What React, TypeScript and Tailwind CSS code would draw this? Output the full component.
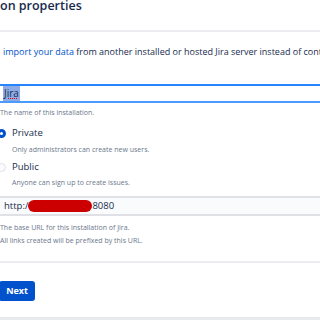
const font = { fontFamily: '"Open Sans", "Noto Sans", sans-serif' };

const Radio = ({ checked }: { checked: boolean }) => (
  <span
    className={
      checked
        ? "w-[9px] h-[9px] -ml-[3px] rounded-full border-[3px] border-[#0052cc] bg-white shrink-0"
        : "w-[9px] h-[9px] -ml-[3px] rounded-full border border-[#dfe1e6] bg-[#fafbfc] shrink-0"
    }
  />
);

export default function App() {
  return (
    <div
      className="w-[320px] h-[320px] overflow-hidden bg-white flex flex-col text-[#172b4d]"
      style={font}
    >
      {/* Header */}
      <div className="h-[32px] shrink-0 border-b-2 border-[#ebecf0]">
        <h1 className="-mt-[1px] text-[12.5px] leading-[14px] font-semibold whitespace-nowrap">
          on properties
        </h1>
      </div>

      <p className="mt-[14px] pl-[3px] text-[9px] leading-[12px] whitespace-nowrap">
        <span className="text-[#0052cc]">import your data</span> from another
        installed or hosted Jira server instead of continuing
      </p>

      {/* Name field */}
      <div className="mt-[26px] -ml-[6px] w-[340px] h-[20px] border-2 border-[#4c9aff] border-t-[#2684ff] bg-white flex items-center pl-[7px] text-[10px]">
        <span className="bg-[#8eabe6] px-[1px] underline decoration-dotted decoration-[#e00000]">
          Jira
        </span>
      </div>
      <p className="mt-[5px] text-[7px] leading-[10px] text-[#6b778c]">
        The name of this installation.
      </p>

      {/* Mode */}
      <div className="mt-[8px] flex items-center gap-[6px] text-[9.5px] leading-[14px]">
        <Radio checked />
        <span>Private</span>
      </div>
      <p className="mt-[5px] pl-[12px] text-[7px] leading-[10px] text-[#6b778c]">
        Only administrators can create new users.
      </p>
      <div className="mt-[5px] flex items-center gap-[6px] text-[9.5px] leading-[14px]">
        <Radio checked={false} />
        <span>Public</span>
      </div>
      <p className="mt-[4px] pl-[12px] text-[7px] leading-[10px] text-[#6b778c]">
        Anyone can sign up to create issues.
      </p>

      {/* Base URL */}
      <div className="mt-[8px] -ml-[6px] w-[340px] h-[20px] shrink-0 border-2 border-[#dfe1e6] bg-[#fafbfc] flex items-center pl-[8px] text-[9.5px]">
        <span>http:/</span>
        <span className="w-[64px] h-[12px] rounded-full bg-[#cc0000]" />
        <span>8080</span>
      </div>
      <div className="mt-[5px] text-[7px] leading-[13px] text-[#6b778c]">
        <p>The base URL for this installation of Jira.</p>
        <p>All links created will be prefixed by this URL.</p>
      </div>

      <div className="mt-[14px] h-[2px] shrink-0 bg-[#ebecf0]" />

      <div className="mt-[13px]">
        <button className="-ml-[1px] w-[36px] h-[20px] rounded-[3px] bg-[#0052cc] text-white text-[9px] font-bold">
          Next
        </button>
      </div>

      <div className="mt-[16px] h-[3px] shrink-0 bg-[#e9eaee]" />
      <div className="h-[1px] shrink-0 bg-[repeating-linear-gradient(90deg,#9a9a9a_0_2px,#2a2a2a_2px_4px)]" />
      <div className="h-[4px] shrink-0 bg-[#1c1c1c]" />
    </div>
  );
}
